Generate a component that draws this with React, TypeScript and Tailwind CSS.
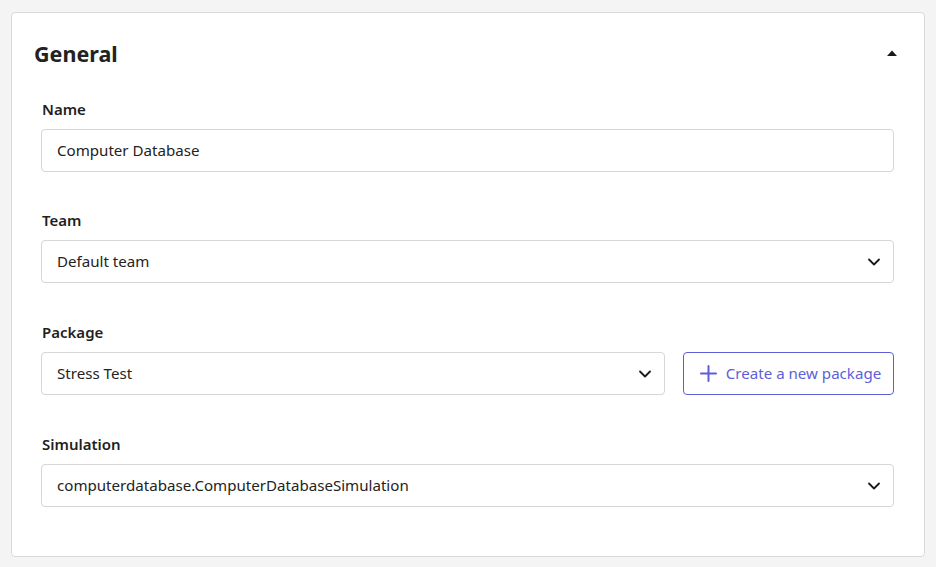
import { ChevronDown } from 'lucide-react';

const font = { fontFamily: '"Noto Sans", "Open Sans", sans-serif' };

function Label({ children }: { children: React.ReactNode }) {
  return <div className="mb-2 h-6 pl-px text-[15px] font-semibold leading-6 text-[#1f1f1f]">{children}</div>;
}

function Select({ value }: { value: string }) {
  return (
    <div className="flex h-[43px] w-full items-center justify-between rounded border border-[#d6d6d6] bg-white pl-[15px] pr-[9px] text-[15.1px] text-[#232323]">
      <span>{value}</span>
      <ChevronDown className="h-5 w-5 text-[#1a1a1a]" strokeWidth={2.2} />
    </div>
  );
}

export default function App() {
  return (
    <div className="min-h-[567px] bg-[#f4f4f4] pl-[11px] pr-[11px] pt-[12px]" style={font}>
      <div className="h-[545px] rounded-[4px] border border-[#d9d9d9] bg-white">
        {/* Header */}
        <div className="mt-[25px] flex h-8 items-center justify-between pl-[22px] pr-[27px]">
          <h2 className="text-[21.5px] font-bold text-[#222]">General</h2>
          <svg width="10" height="6" viewBox="0 0 10 6" className="mb-[2px]">
            <path d="M0 6 L5 0.5 L10 6 Z" fill="#1a1a1a" />
          </svg>
        </div>

        {/* Fields */}
        <div className="mt-[27px] flex flex-col pl-[29px] pr-[30px]">
          <div>
            <Label>Name</Label>
            <div className="flex h-[43px] items-center rounded border border-[#d6d6d6] bg-white px-[15px] text-[15.1px] text-[#232323]">
              Computer Database
            </div>
          </div>

          <div className="mt-[36px]">
            <Label>Team</Label>
            <Select value="Default team" />
          </div>

          <div className="mt-[37px]">
            <Label>Package</Label>
            <div className="flex gap-[18px]">
              <div className="flex-1">
                <Select value="Stress Test" />
              </div>
              <button className="flex h-[43px] w-[211px] items-center justify-center gap-[9px] rounded border border-[#5e5fd8] pl-[4px] text-[15.1px] text-[#5e5fd8]">
                <svg width="17" height="17" viewBox="0 0 17 17">
                  <path d="M8.5 1 V16 M1 8.5 H16" stroke="currentColor" strokeWidth="2" strokeLinecap="round" />
                </svg>
                Create a new package
              </button>
            </div>
          </div>

          <div className="mt-[37px]">
            <Label>Simulation</Label>
            <Select value="computerdatabase.ComputerDatabaseSimulation" />
          </div>
        </div>
      </div>
    </div>
  );
}
